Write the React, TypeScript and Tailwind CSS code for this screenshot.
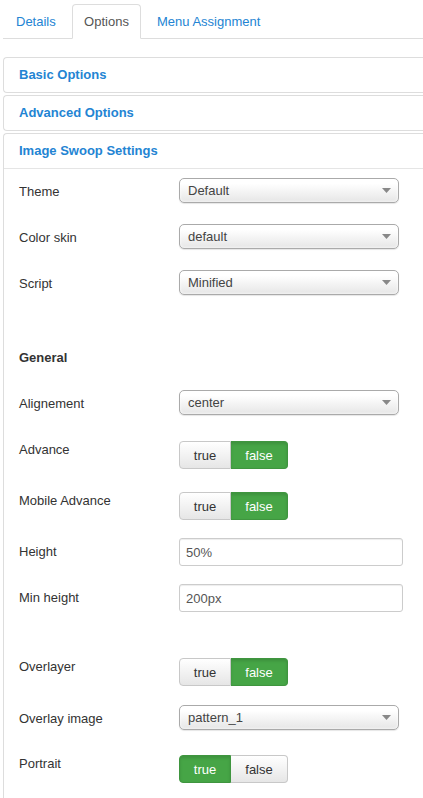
import React from "react";

type Kind = "select" | "toggle" | "input";

interface Field {
  label: string;
  kind: Kind;
  value: string;
  mt: string;
}

const top: Field[] = [
  { label: "Theme", kind: "select", value: "Default", mt: "mt-[9px]" },
  { label: "Color skin", kind: "select", value: "default", mt: "mt-[21px]" },
  { label: "Script", kind: "select", value: "Minified", mt: "mt-[21px]" },
];

const general: Field[] = [
  { label: "Alignement", kind: "select", value: "center", mt: "mt-[23px]" },
  { label: "Advance", kind: "toggle", value: "false", mt: "mt-[26px]" },
  { label: "Mobile Advance", kind: "toggle", value: "false", mt: "mt-[23px]" },
  { label: "Height", kind: "input", value: "50%", mt: "mt-[18px]" },
  { label: "Min height", kind: "input", value: "200px", mt: "mt-[18px]" },
  { label: "Overlayer", kind: "toggle", value: "false", mt: "mt-[46px]" },
  { label: "Overlay image", kind: "select", value: "pattern_1", mt: "mt-[19px]" },
  { label: "Portrait", kind: "toggle", value: "true", mt: "mt-[25px]" },
];

function Select({ value }: { value: string }) {
  return (
    <div className="flex h-[25px] w-[220px] items-center justify-between rounded-[5px] border border-[#aaa] bg-gradient-to-b from-white from-[20%] to-[#e6e6e6] pl-2 pr-[7px] leading-none text-[#444] shadow-[0_0_3px_#fff_inset,0_1px_1px_rgba(0,0,0,0.1)]">
      <span>{value}</span>
      <svg width="9" height="5" viewBox="0 0 9 5">
        <path d="M0 0h9L4.5 5z" fill="#888" />
      </svg>
    </div>
  );
}

function Toggle({ value }: { value: string }) {
  const on = "bg-[#46a546] text-white shadow-[inset_0_2px_3px_rgba(0,0,0,0.12)] border-[#3f953f]";
  const off = "bg-gradient-to-b from-white to-[#e6e6e6] text-[#333] border-[#c8c8c8]";
  return (
    <div className="flex h-[28px] w-[109px] leading-none">
      <div
        className={`flex w-[52px] items-center justify-center rounded-l-[4px] border ${value === "true" ? on : off}`}
      >
        true
      </div>
      <div
        className={`flex w-[57px] items-center justify-center rounded-r-[4px] border border-l-0 ${value === "false" ? on : off}`}
      >
        false
      </div>
    </div>
  );
}

function Input({ value }: { value: string }) {
  return (
    <div className="flex h-[28px] w-[224px] items-center rounded-[3px] border border-[#ccc] bg-white pl-[6px] leading-none text-[#555] shadow-[inset_0_1px_1px_rgba(0,0,0,0.075)]">
      {value}
    </div>
  );
}

function Row({ f }: { f: Field }) {
  const pad = f.kind === "toggle" ? "pt-0" : "pt-[5px]";
  return (
    <div className={`flex ${f.mt}`}>
      <div className={`w-[160px] shrink-0 leading-[18px] ${pad}`}>{f.label}</div>
      {f.kind === "select" && <Select value={f.value} />}
      {f.kind === "toggle" && <Toggle value={f.value} />}
      {f.kind === "input" && <Input value={f.value} />}
    </div>
  );
}

function Panel({ title, children }: { title: string; children?: React.ReactNode }) {
  return (
    <div className="mb-[2px] rounded-l-[4px] border border-r-0 border-[#ddd]">
      <div
        className={`flex h-[34px] items-center pl-[15px] font-bold text-[#2384d3] ${children ? "h-[35px] border-b border-[#e5e5e5]" : ""}`}
      >
        {title}
      </div>
      {children}
    </div>
  );
}

export default function App() {
  return (
    <div className="h-[798px] overflow-hidden bg-white pl-[3px] font-['Liberation_Sans',Arial,sans-serif] text-[13px] text-[#333]">
      <div className="flex h-[39px] items-end border-b border-[#ddd] pt-[4px]">
        <div className="-mb-px flex h-[35px] w-[69px] items-center pl-[13px] text-[#2384d3]">Details</div>
        <div className="-mb-px flex h-[35px] w-[69px] items-center justify-center rounded-t-[4px] border border-b-white border-[#ddd] bg-white text-[#555]">
          Options
        </div>
        <div className="-mb-px flex h-[35px] items-center pl-[16px] text-[#2384d3]">Menu Assignment</div>
      </div>

      <div className="mt-[18px]">
        <Panel title="Basic Options" />
        <Panel title="Advanced Options" />
        <Panel title="Image Swoop Settings">
          <div className="pl-[15px]">
            {top.map((f) => (
              <Row key={f.label} f={f} />
            ))}
            <div className="mt-[54px] font-bold leading-[18px]">General</div>
            {general.map((f) => (
              <Row key={f.label} f={f} />
            ))}
            <div className="h-[20px]" />
          </div>
        </Panel>
      </div>
    </div>
  );
}
